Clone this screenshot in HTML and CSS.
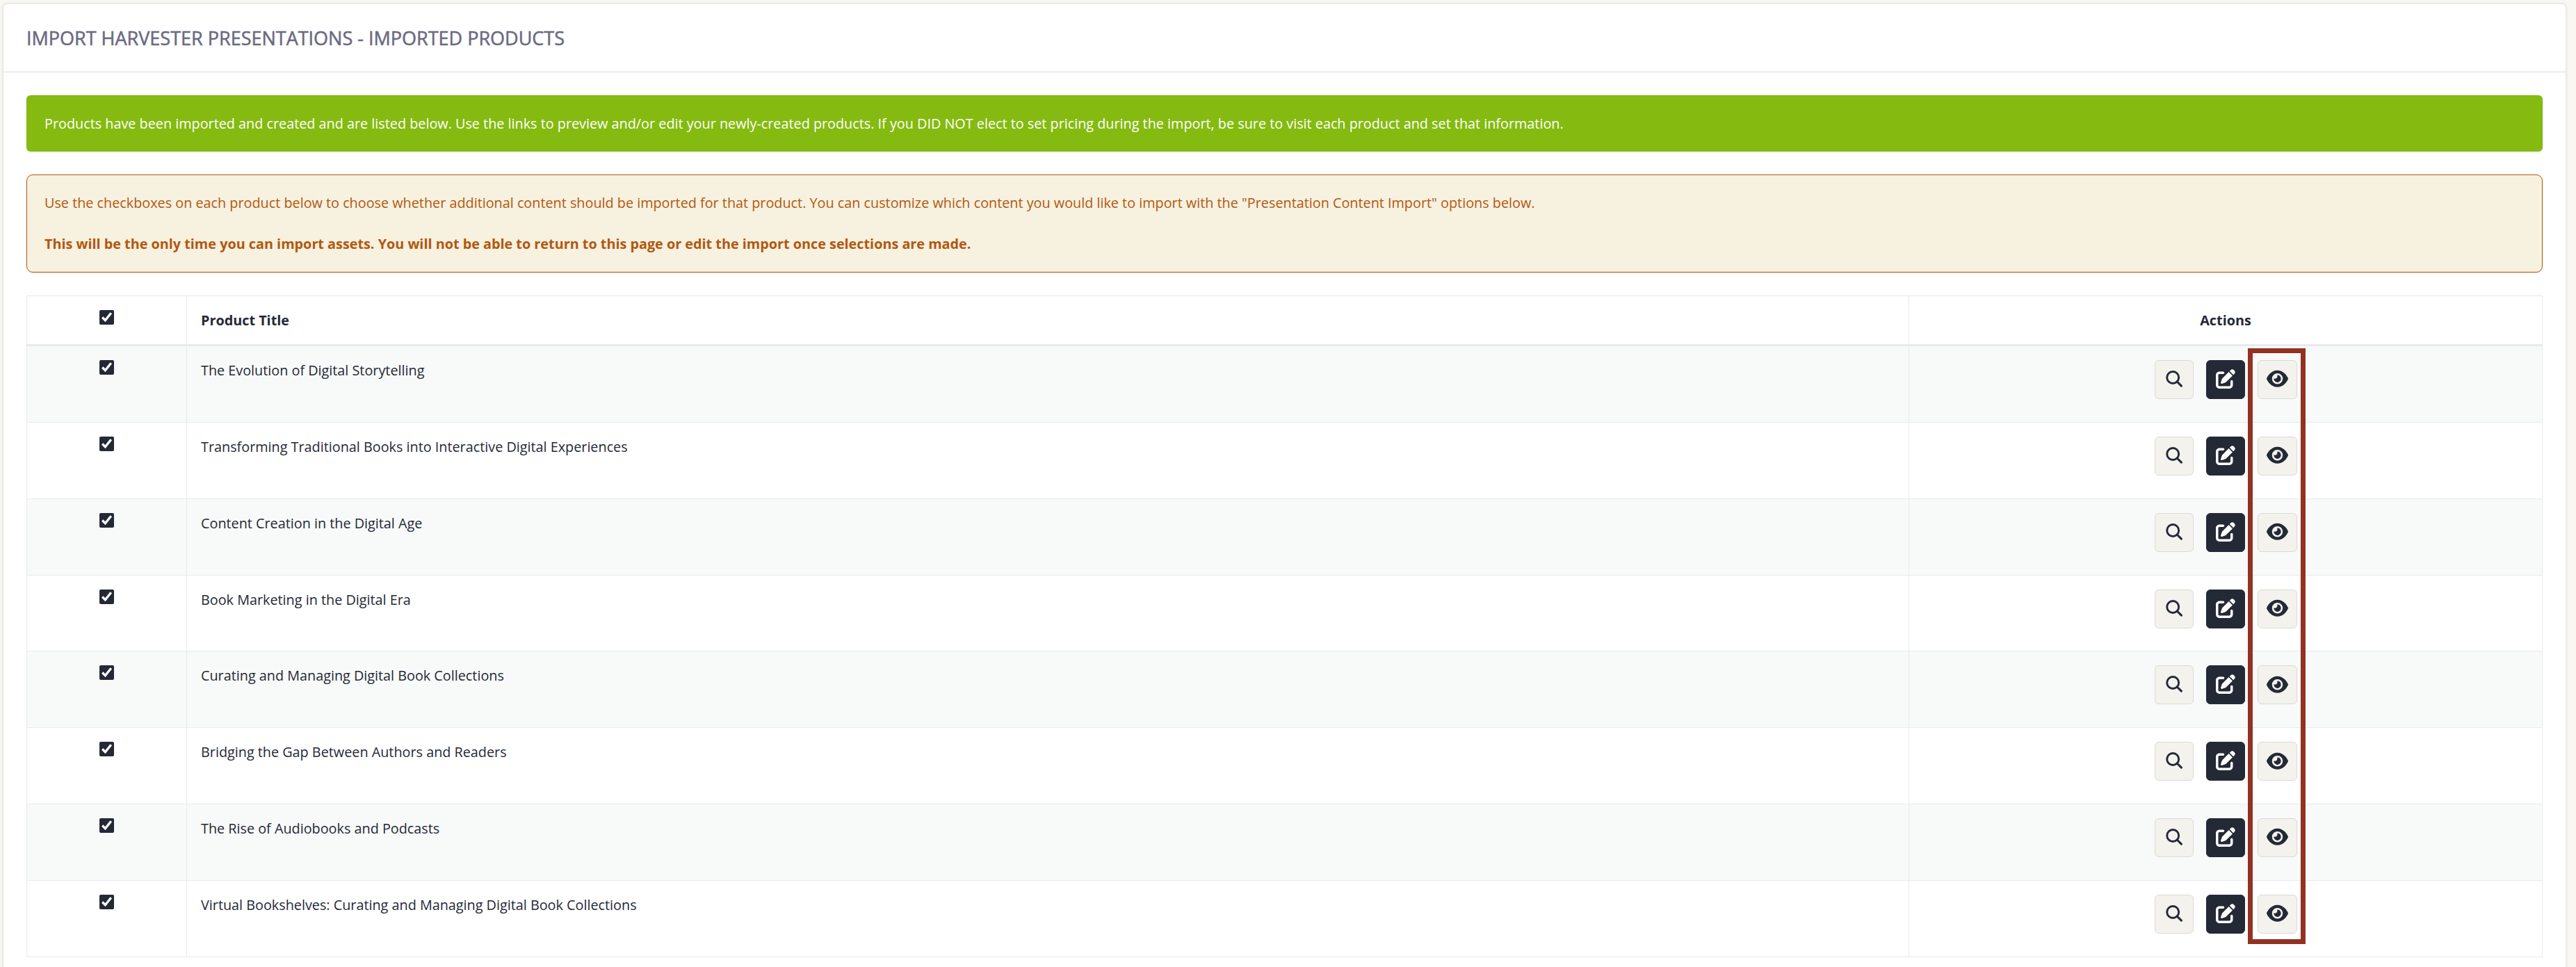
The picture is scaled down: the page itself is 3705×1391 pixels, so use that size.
FILE: index.html
```html
<!DOCTYPE html>
<html lang="en">
<head>
<meta charset="utf-8">
<title>Imported Products</title>
<link rel="stylesheet" href="styles.css">
</head>
<body>
<svg class="sprite" aria-hidden="true">
  <symbol id="i-search" viewBox="0 0 24 24"><circle cx="10.2" cy="10" r="8.5" fill="none" stroke="currentColor" stroke-width="2.9"/><path d="M16.2 16 22.4 22.2" fill="none" stroke="currentColor" stroke-width="3.1" stroke-linecap="round"/></symbol>
  <symbol id="i-edit" viewBox="0 0 512 512"><path fill="currentColor" d="M471.600 21.400c-21.900-21.900-57.300-21.900-79.200 0L362.300 51.700l97.900 97.900 30.100-30.100c21.900-21.900 21.900-57.300 0-79.200L471.600 21.400zm-299.200 220c-6.100 6.100-10.800 13.600-13.500 21.900l-29.600 88.800c-2.900 8.600-.6 18.100 5.800 24.600s15.900 8.700 24.600 5.800l88.800-29.600c8.200-2.700 15.700-7.400 21.900-13.500L437.700 172.300 339.700 74.300 172.400 241.700zM96 64C43 64 0 107 0 160V416c0 53 43 96 96 96H352c53 0 96-43 96-96V320c0-17.700-14.300-32-32-32s-32 14.300-32 32v96c0 17.700-14.300 32-32 32H96c-17.700 0-32-14.300-32-32V160c0-17.700 14.300-32 32-32h96c17.700 0 32-14.300 32-32s-14.300-32-32-32H96z"/></symbol>
  <symbol id="i-eye" viewBox="0 0 576 512"><path fill="currentColor" d="M288 32c-80.800 0-145.500 36.800-192.600 80.600C48.600 156 17.300 208 2.500 243.700c-3.300 7.900-3.300 16.700 0 24.600C17.300 304 48.600 356 95.400 399.400C142.500 443.200 207.200 480 288 480s145.500-36.800 192.600-80.600c46.800-43.500 78.100-95.400 93-131.100c3.300-7.900 3.300-16.700 0-24.600c-14.900-35.700-46.200-87.700-93-131.100C433.500 68.800 368.800 32 288 32zM144 256a144 144 0 1 1 288 0 144 144 0 1 1-288 0zm144-64c0 35.300-28.700 64-64 64c-7.100 0-13.900-1.200-20.300-3.300c-5.500-1.800-11.900 1.600-11.700 7.400c.3 6.900 1.300 13.800 3.200 20.700c13.700 51.200 66.400 81.600 117.600 67.900s81.600-66.400 67.900-117.600c-11.100-41.500-47.800-69.400-88.600-71.100c-5.800-.2-9.200 6.100-7.400 11.700c2.100 6.400 3.300 13.200 3.300 20.300z"/></symbol>
</svg>
<main class="card">
  <header class="card-header"><h1>IMPORT HARVESTER PRESENTATIONS - IMPORTED PRODUCTS</h1></header>
  <div class="card-body">
    <div class="alert success">Products have been imported and created and are listed below. Use the links to preview and/or edit your newly-created products. If you DID NOT elect to set pricing during the import, be sure to visit each product and set that information.</div>
    <div class="alert warning">Use the checkboxes on each product below to choose whether additional content should be imported for that product. You can customize which content you would like to import with the "Presentation Content Import" options below.<br><br><b>This will be the only time you can import assets. You will not be able to return to this page or edit the import once selections are made.</b></div>
    <section class="table">
      <div class="row head"><div class="cell check"><input type="checkbox" checked></div><div class="cell">Product Title</div><div class="cell actions">Actions</div></div>
      <div class="row"><div class="cell check"><input type="checkbox" checked></div><div class="cell">The Evolution of Digital Storytelling</div><div class="cell actions"><a class="btn"><svg class="s"><use href="#i-search"/></svg></a><a class="btn dark"><svg class="e"><use href="#i-edit"/></svg></a><a class="btn view"><svg class="v"><use href="#i-eye"/></svg></a></div></div>
      <div class="row"><div class="cell check"><input type="checkbox" checked></div><div class="cell">Transforming Traditional Books into Interactive Digital Experiences</div><div class="cell actions"><a class="btn"><svg class="s"><use href="#i-search"/></svg></a><a class="btn dark"><svg class="e"><use href="#i-edit"/></svg></a><a class="btn view"><svg class="v"><use href="#i-eye"/></svg></a></div></div>
      <div class="row"><div class="cell check"><input type="checkbox" checked></div><div class="cell">Content Creation in the Digital Age</div><div class="cell actions"><a class="btn"><svg class="s"><use href="#i-search"/></svg></a><a class="btn dark"><svg class="e"><use href="#i-edit"/></svg></a><a class="btn view"><svg class="v"><use href="#i-eye"/></svg></a></div></div>
      <div class="row"><div class="cell check"><input type="checkbox" checked></div><div class="cell">Book Marketing in the Digital Era</div><div class="cell actions"><a class="btn"><svg class="s"><use href="#i-search"/></svg></a><a class="btn dark"><svg class="e"><use href="#i-edit"/></svg></a><a class="btn view"><svg class="v"><use href="#i-eye"/></svg></a></div></div>
      <div class="row"><div class="cell check"><input type="checkbox" checked></div><div class="cell">Curating and Managing Digital Book Collections</div><div class="cell actions"><a class="btn"><svg class="s"><use href="#i-search"/></svg></a><a class="btn dark"><svg class="e"><use href="#i-edit"/></svg></a><a class="btn view"><svg class="v"><use href="#i-eye"/></svg></a></div></div>
      <div class="row"><div class="cell check"><input type="checkbox" checked></div><div class="cell">Bridging the Gap Between Authors and Readers</div><div class="cell actions"><a class="btn"><svg class="s"><use href="#i-search"/></svg></a><a class="btn dark"><svg class="e"><use href="#i-edit"/></svg></a><a class="btn view"><svg class="v"><use href="#i-eye"/></svg></a></div></div>
      <div class="row"><div class="cell check"><input type="checkbox" checked></div><div class="cell">The Rise of Audiobooks and Podcasts</div><div class="cell actions"><a class="btn"><svg class="s"><use href="#i-search"/></svg></a><a class="btn dark"><svg class="e"><use href="#i-edit"/></svg></a><a class="btn view"><svg class="v"><use href="#i-eye"/></svg></a></div></div>
      <div class="row"><div class="cell check"><input type="checkbox" checked></div><div class="cell">Virtual Bookshelves: Curating and Managing Digital Book Collections</div><div class="cell actions"><a class="btn"><svg class="s"><use href="#i-search"/></svg></a><a class="btn dark"><svg class="e"><use href="#i-edit"/></svg></a><a class="btn view"><svg class="v"><use href="#i-eye"/></svg></a></div></div>
      <div class="highlight"></div>
    </section>
  </div>
</main>
</body>
</html>
```
FILE: styles.css
```css
* { box-sizing: border-box; }
body {
  margin: 0;
  padding: 6px 15px 0 5px;
  background: #f8f7f3;
  color: #242936;
  font: 19.81px/29.25px "Open Sans", "Noto Sans", sans-serif;
}
.sprite { display: none; }
.card {
  height: 1385px;
  background: #fff;
  border-radius: 6px 6px 0 0;
  box-shadow: 0 0 3px 2px #e8e7e4;
}
.card-header {
  height: 98px;
  padding: 29px 33px 0;
  border-bottom: 1px solid #dcdcdf;
}
.card-header h1 {
  margin: 0;
  color: #6b6981;
  font-size: 27px;
  font-weight: 500;
  line-height: 39px;
  -webkit-text-stroke: .5px #6b6981;
}
.card-body { padding: 33px 33px 0; }
.alert { padding: 25.5px 26px; }
.success {
  height: 81px;
  margin-bottom: 33px;
  border-radius: 6px;
  background: #85ba11;
  color: #fff;
  box-shadow: 0 1px 3px rgba(0, 0, 0, .12);
}
.warning {
  height: 141px;
  margin-bottom: 33px;
  padding: 25px;
  border: 1px solid #b3570f;
  border-radius: 9px;
  background: #f7f1df;
  color: #b3570f;
  line-height: 29.5px;
  box-shadow: 0 1px 3px rgba(0, 0, 0, .1);
}
.table {
  position: relative;
  border-left: 1px solid #e8eaec;
  border-top: 1px solid #e8eaec;
}
.row {
  display: grid;
  grid-template-columns: 230px 2477px 1fr;
  height: 109.86px;
  border-bottom: 1px solid #e8eaec;
}
.row:nth-child(even) { background: #f8faf9; }
.head {
  height: 72px;
  border-bottom: 3px solid #e8eaee;
  font-weight: 700;
}
.cell {
  padding: 20px 20px 0;
  border-right: 1px solid #e8eaec;
}
.check { display: flex; justify-content: center; align-items: flex-start; }
.check input {
  width: 21px;
  height: 21px;
  margin: 0;
  accent-color: #242936;
}
.actions { display: flex; justify-content: center; align-items: flex-start; gap: 18px; }
.btn {
  display: flex;
  align-items: center;
  justify-content: center;
  width: 56px;
  height: 56px;
  padding-bottom: 2px;
  border: 1px solid #dbdad4;
  border-radius: 6px;
  background: #f3f2ed;
}
.view { width: 57px; }
.dark { padding-left: 1px; border-color: #242936; background: #242936; color: #fff; }
.s { width: 24px; height: 24px; }
.e { width: 28px; height: 28px; }
.v { width: 31px; height: 27.5px; }
.highlight {
  position: absolute;
  left: 3194px;
  top: 75px;
  width: 83px;
  height: 857px;
  border: 7px solid #933122;
}
```
